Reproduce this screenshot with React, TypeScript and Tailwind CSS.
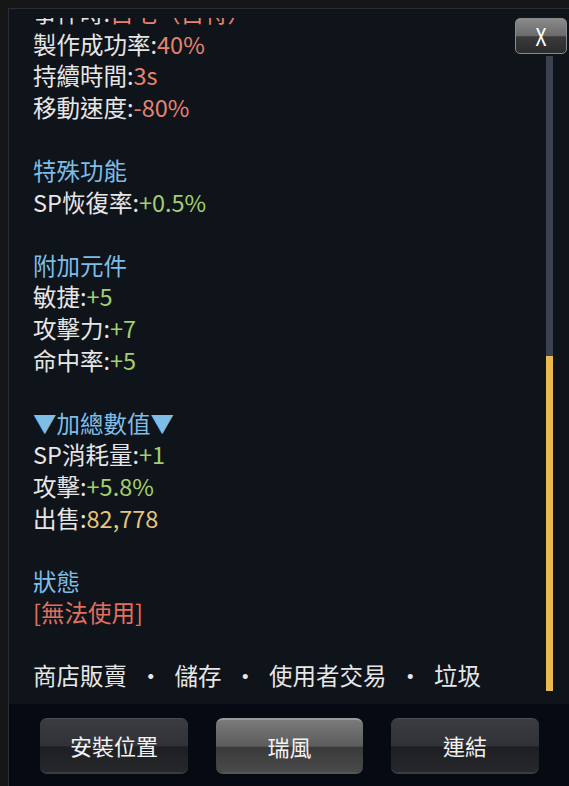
import React from 'react';

// Item tooltip panel (game UI)
type Seg = { t: string; c?: string };
type Line = Seg[] | null;

const W = 'text-[#e6e6e6]';
const RED = 'text-[#e58370]';
const BLUE = 'text-[#7dbde6]';
const GREEN = 'text-[#a3cf6e]';
const GOLD = 'text-[#e7c57a]';
const STATUS = 'text-[#e2705f]';

const lines: Line[] = [
  [{ t: '事件時:', c: W }, { t: '自毛（自特）', c: RED }],
  [{ t: '製作成功率:', c: W }, { t: '40%', c: RED }],
  [{ t: '持續時間:', c: W }, { t: '3s', c: RED }],
  [{ t: '移動速度:', c: W }, { t: '-80%', c: RED }],
  null,
  [{ t: '特殊功能', c: BLUE }],
  [{ t: 'SP恢復率:', c: W }, { t: '+0.5%', c: GREEN }],
  null,
  [{ t: '附加元件', c: BLUE }],
  [{ t: '敏捷:', c: W }, { t: '+5', c: GREEN }],
  [{ t: '攻擊力:', c: W }, { t: '+7', c: GREEN }],
  [{ t: '命中率:', c: W }, { t: '+5', c: GREEN }],
  null,
  [{ t: '▼加總數值▼', c: BLUE }],
  [{ t: 'SP消耗量:', c: W }, { t: '+1', c: GREEN }],
  [{ t: '攻擊:', c: W }, { t: '+5.8%', c: GREEN }],
  [{ t: '出售:', c: W }, { t: '82,778', c: GOLD }],
  null,
  [{ t: '狀態', c: BLUE }],
  [{ t: '[無法使用]', c: STATUS }],
  null,
];

const actions = ['商店販賣', '儲存', '使用者交易', '垃圾'];

const font = { fontFamily: '"Noto Sans CJK TC", "Noto Sans", sans-serif' };

const App: React.FC = () => {
  return (
    <div className="w-[569px] h-[786px] bg-[#161616] pl-2 pt-2 overflow-hidden" style={font}>
      <div className="relative flex flex-col w-[561px] h-[778px] border-l border-t border-[#2a2d33] bg-[#0f131a]">
        {/* Scrollable text area */}
        <div className="mt-[9px] h-[686px] overflow-hidden">
          <div className="pl-[24px] mt-[-21px] text-[23.5px] leading-[31.6px] text-[#e6e6e6]">
            {lines.map((line, i) =>
              line ? (
                <div key={i} className="whitespace-pre">
                  {line.map((s, j) => (
                    <span key={j} className={s.c}>
                      {s.t}
                    </span>
                  ))}
                </div>
              ) : (
                <div key={i} className="h-[31.6px]" />
              )
            )}
            <div className="flex whitespace-pre">
              {actions.map((a, i) => (
                <React.Fragment key={a}>
                  {i > 0 && <span className="mx-[12px]">・</span>}
                  <span>{a}</span>
                </React.Fragment>
              ))}
            </div>
          </div>
        </div>

        {/* Scrollbar */}
        <div className="absolute left-[537px] top-[47px] w-[7px] h-[635px] bg-[#3a4252]">
          <div className="absolute left-0 bottom-0 w-full h-[335px] bg-[#e9bb4e]" />
        </div>

        {/* Close button */}
        <button className="absolute left-[506px] top-[9px] w-[52px] h-[36px] rounded-[5px] border border-[#8a8a8a] bg-[linear-gradient(to_bottom,#8a8a8a_0%,#6a6a6a_50%,#3a3a3a_52%,#2c2c2c_100%)] text-white text-[24px] leading-none flex items-center justify-center">
          <span className="inline-block scale-x-[0.8]">X</span>
        </button>

        {/* Bottom buttons */}
        <div className="flex-1 bg-[#060a12] flex gap-[28px] pl-[31px] pt-[14px]">
          {[
            { label: '安裝位置', light: false },
            { label: '瑞風', light: true },
            { label: '連結', light: false },
          ].map((b) => (
            <button
              key={b.label}
              className={
                b.light
                  ? 'w-[147px] h-[54px] rounded-[7px] border-t-2 border-[#9a9a9a] bg-[linear-gradient(to_bottom,#7a7a7a_0%,#5c5c5c_50%,#3a3a3a_53%,#4a4a4a_100%)] text-[#f2f2f2] text-[22px] shadow-[0_2px_0_#555]'
                  : 'w-[148px] h-[54px] rounded-[7px] border-t border-[#4a4c52] bg-[linear-gradient(to_bottom,#3a3c42_0%,#303238_50%,#1d1f23_53%,#26282c_100%)] text-[#f2f2f2] text-[22px] shadow-[0_2px_0_#3a3c40]'
              }
            >
              {b.label}
            </button>
          ))}
        </div>
      </div>
    </div>
  );
};

export default App;
